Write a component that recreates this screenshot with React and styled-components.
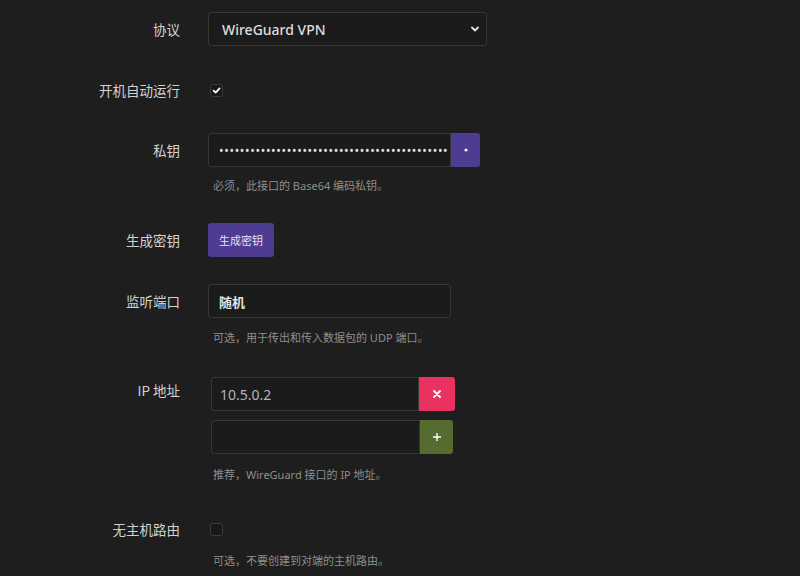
import React from "react";
import styled, { createGlobalStyle } from "styled-components";

const Global = createGlobalStyle`
  html, body { margin: 0; padding: 0; background: #1e1e1e; }
  body { font-family: "Noto Sans", "Noto Sans CJK SC", sans-serif; color: #d4d4d4; }
  * { box-sizing: border-box; }
`;

const Page = styled.div`
  width: 800px;
  height: 576px;
  overflow: hidden;
  background: #1e1e1e;
  padding-top: 12px;
  display: flex;
  flex-direction: column;
`;

const Row = styled.div`
  display: grid;
  grid-template-columns: 180px 1fr;
  column-gap: 28px;
  margin-top: ${(p) => p.$mt || 0}px;
`;

const Label = styled.div`
  text-align: right;
  font-family: "Noto Sans CJK SC", sans-serif;
  font-size: 13.5px;
  color: #d2d2d2;
  line-height: ${(p) => p.$lh || 34}px;
  height: 34px;
  margin-top: ${(p) => p.$mt || 0}px;
`;

const Field = styled.div`
  display: flex;
  flex-direction: column;
  align-items: flex-start;
`;

const Control = styled.div`
  display: flex;
  align-items: center;
  height: 34px;
`;

const SelectBox = styled.div`
  width: 279px;
  height: 34px;
  border: 1px solid #363636;
  border-radius: 3px;
  background: #1b1b1b;
  display: flex;
  align-items: center;
  justify-content: space-between;
  padding: 0 6px 0 13px;
  font-family: "Noto Sans", sans-serif;
  font-size: 14px;
  font-weight: 500;
  color: #dedede;
`;

const CheckBox = styled.div`
  width: 13px;
  height: 13px;
  margin-left: 2px;
  border-radius: 3px;
  border: 1px solid ${(p) => (p.$checked ? "#3a3a3a" : "#3c3c3c")};
  background: #181818;
  display: flex;
  align-items: center;
  justify-content: center;
`;

const InputGroup = styled.div`
  display: flex;
  height: 34px;
  margin-left: ${(p) => p.$ml || 0}px;
  margin-top: ${(p) => p.$mt || 0}px;
`;

const TextInput = styled.div`
  width: ${(p) => p.$w}px;
  height: 34px;
  border: 1px solid #363636;
  border-radius: ${(p) => (p.$joined ? "3px 0 0 3px" : "3px")};
  background: #1b1b1b;
  display: flex;
  align-items: center;
  padding-left: ${(p) => p.$pl || 10}px;
  font-family: "Noto Sans", "Noto Sans CJK SC", sans-serif;
  font-size: ${(p) => p.$fs || 14}px;
  font-weight: ${(p) => p.$fw || 400};
  color: ${(p) => p.$color || "#dcdcdc"};
  overflow: hidden;
  white-space: nowrap;
`;

const Dots = styled.span`
  letter-spacing: 0.7px;
  font-size: 12px;
  color: #e0e0e0;
`;

const AddonButton = styled.div`
  width: ${(p) => p.$w}px;
  height: 34px;
  background: ${(p) => p.$bg};
  border-radius: 0 3px 3px 0;
  display: flex;
  align-items: center;
  justify-content: center;
  color: #fff;
`;

const Button = styled.div`
  height: 34px;
  padding: 0 11px;
  background: #4d3c91;
  border-radius: 3px;
  display: flex;
  align-items: center;
  font-family: "Noto Sans CJK SC", sans-serif;
  font-size: 11px;
  color: #e4e0f2;
`;

const Help = styled.div`
  margin-top: ${(p) => p.$mt || 11}px;
  padding-left: 5px;
  font-family: "Noto Sans", "Noto Sans CJK SC", sans-serif;
  font-size: 11px;
  line-height: 16px;
  color: #8e8e8e;
`;

const Chevron = () => (
  <svg width="10" height="10" viewBox="0 0 10 10">
    <path d="M2 3.5 L5 6.5 L8 3.5" fill="none" stroke="#e6e6e6" strokeWidth="1.8" strokeLinecap="round" strokeLinejoin="round" />
  </svg>
);

const Check = () => (
  <svg width="9" height="9" viewBox="0 0 10 10">
    <path d="M1.8 5.2 L4 7.4 L8.4 2.6" fill="none" stroke="#ffffff" strokeWidth="2" strokeLinecap="round" strokeLinejoin="round" />
  </svg>
);

const XIcon = () => (
  <svg width="10" height="10" viewBox="0 0 10 10">
    <path d="M2 2 L8 8 M8 2 L2 8" stroke="#ffffff" strokeWidth="1.8" strokeLinecap="round" />
  </svg>
);

const PlusIcon = () => (
  <svg width="10" height="10" viewBox="0 0 10 10">
    <path d="M5 1 V9 M1 5 H9" stroke="#ffffff" strokeWidth="1.4" />
  </svg>
);

export default function App() {
  return (
    <>
      <Global />
      <Page>
        <Row>
          <Label>协议</Label>
          <Field>
            <SelectBox>
              <span>WireGuard VPN</span>
              <Chevron />
            </SelectBox>
          </Field>
        </Row>

        <Row $mt={27}>
          <Label>开机自动运行</Label>
          <Field>
            <Control>
              <CheckBox $checked>
                <Check />
              </CheckBox>
            </Control>
          </Field>
        </Row>

        <Row $mt={26}>
          <Label>私钥</Label>
          <Field>
            <InputGroup>
              <TextInput $w={243} $joined $pl={10}>
                <Dots>{"•".repeat(44)}</Dots>
              </TextInput>
              <AddonButton $w={29} $bg="#4d3c91">
                <svg width="4" height="4" viewBox="0 0 4 4"><circle cx="2" cy="2" r="1.6" fill="#f0f0f0" /></svg>
              </AddonButton>
            </InputGroup>
            <Help>必须，此接口的 Base64 编码私钥。</Help>
          </Field>
        </Row>

        <Row $mt={29}>
          <Label>生成密钥</Label>
          <Field>
            <Button>生成密钥</Button>
          </Field>
        </Row>

        <Row $mt={27}>
          <Label>监听端口</Label>
          <Field>
            <TextInput $w={243} $pl={10} $fs={13} $fw={700} $color="#e2e2e2">随机</TextInput>
            <Help $mt={12}>可选，用于传出和传入数据包的 UDP 端口。</Help>
          </Field>
        </Row>

        <Row $mt={31}>
          <Label $mt={-4}>IP 地址</Label>
          <Field>
            <InputGroup $ml={3}>
              <TextInput $w={208} $joined $pl={8} $color="#aeb5bd">10.5.0.2</TextInput>
              <AddonButton $w={36} $bg="#e9325f">
                <XIcon />
              </AddonButton>
            </InputGroup>
            <InputGroup $ml={3} $mt={9}>
              <TextInput $w={209} $joined />
              <AddonButton $w={33} $bg="#566b2f">
                <PlusIcon />
              </AddonButton>
            </InputGroup>
            <Help $mt={13}>推荐，WireGuard 接口的 IP 地址。</Help>
          </Field>
        </Row>

        <Row $mt={29}>
          <Label>无主机路由</Label>
          <Field>
            <Control>
              <CheckBox />
            </Control>
            <Help $mt={7}>可选，不要创建到对端的主机路由。</Help>
          </Field>
        </Row>
      </Page>
    </>
  );
}
